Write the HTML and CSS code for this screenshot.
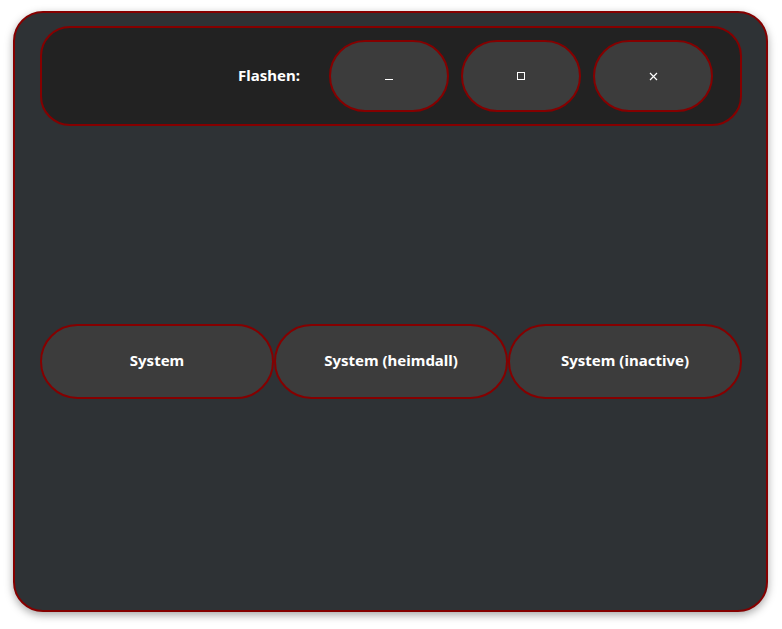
FILE: index.html
```html
<!DOCTYPE html>
<html>
<head>
<meta charset="utf-8">
<link rel="stylesheet" href="styles.css">
</head>
<body>
<div class="window">
  <div class="header">
    <span class="label">Flashen:</span>
    <button class="hbtn" aria-label="minimize"><span class="ico-min"></span></button>
    <button class="hbtn" aria-label="maximize"><span class="ico-max"></span></button>
    <button class="hbtn" aria-label="close">
      <svg width="9" height="9" viewBox="0 0 9 9"><path d="M1 1L8 8M8 1L1 8" stroke="#fff" stroke-width="1.2" fill="none"/></svg>
    </button>
  </div>
  <div class="content">
    <div class="row">
      <button class="sbtn">System</button>
      <button class="sbtn">System (heimdall)</button>
      <button class="sbtn">System (inactive)</button>
    </div>
  </div>
</div>
</body>
</html>
```

FILE: styles.css
```css
html, body {
  margin: 0;
  padding: 0;
  background: #ffffff;
}
body {
  width: 782px;
  height: 629px;
  overflow: hidden;
  font-family: "Noto Sans", "DejaVu Sans", sans-serif;
}
.window {
  box-sizing: border-box;
  margin: 11px 0 0 13px;
  width: 755px;
  height: 601px;
  background: #2e3235;
  border: 2px solid #850000;
  border-radius: 30px;
  box-shadow: 0 3px 9px rgba(0,0,0,0.35);
  display: flex;
  flex-direction: column;
  padding: 13px 24px 13px 25px;
}
.header {
  box-sizing: border-box;
  height: 100px;
  background: #222222;
  border: 2px solid #850000;
  border-radius: 30px;
  display: flex;
  align-items: center;
  justify-content: flex-end;
  padding: 0 27px 0 0;
  gap: 12px;
}
.label {
  color: #ffffff;
  font-weight: bold;
  font-size: 15px;
  margin-right: 17px;
  padding-bottom: 3px;
}
.hbtn {
  box-sizing: border-box;
  width: 120px;
  height: 72px;
  background: #3c3c3c;
  border: 2px solid #850000;
  border-radius: 36px;
  display: flex;
  align-items: center;
  justify-content: center;
  padding: 0;
  margin: 0;
}
.ico-min {
  display: block;
  width: 8px;
  height: 1px;
  background: #ffffff;
  margin-top: 6px;
}
.ico-max {
  display: block;
  box-sizing: border-box;
  width: 8px;
  height: 8px;
  border: 1px solid #ffffff;
}
.content {
  flex: 1;
  display: flex;
  align-items: center;
}
.row {
  display: flex;
  width: 100%;
}
.sbtn {
  box-sizing: border-box;
  flex: 1;
  height: 75px;
  background: #3c3c3c;
  border: 2px solid #850000;
  border-radius: 38px;
  color: #ffffff;
  font-family: "Noto Sans", "DejaVu Sans", sans-serif;
  font-weight: bold;
  font-size: 15px;
  padding: 0 0 3px 0;
  margin: 0;
}
```
